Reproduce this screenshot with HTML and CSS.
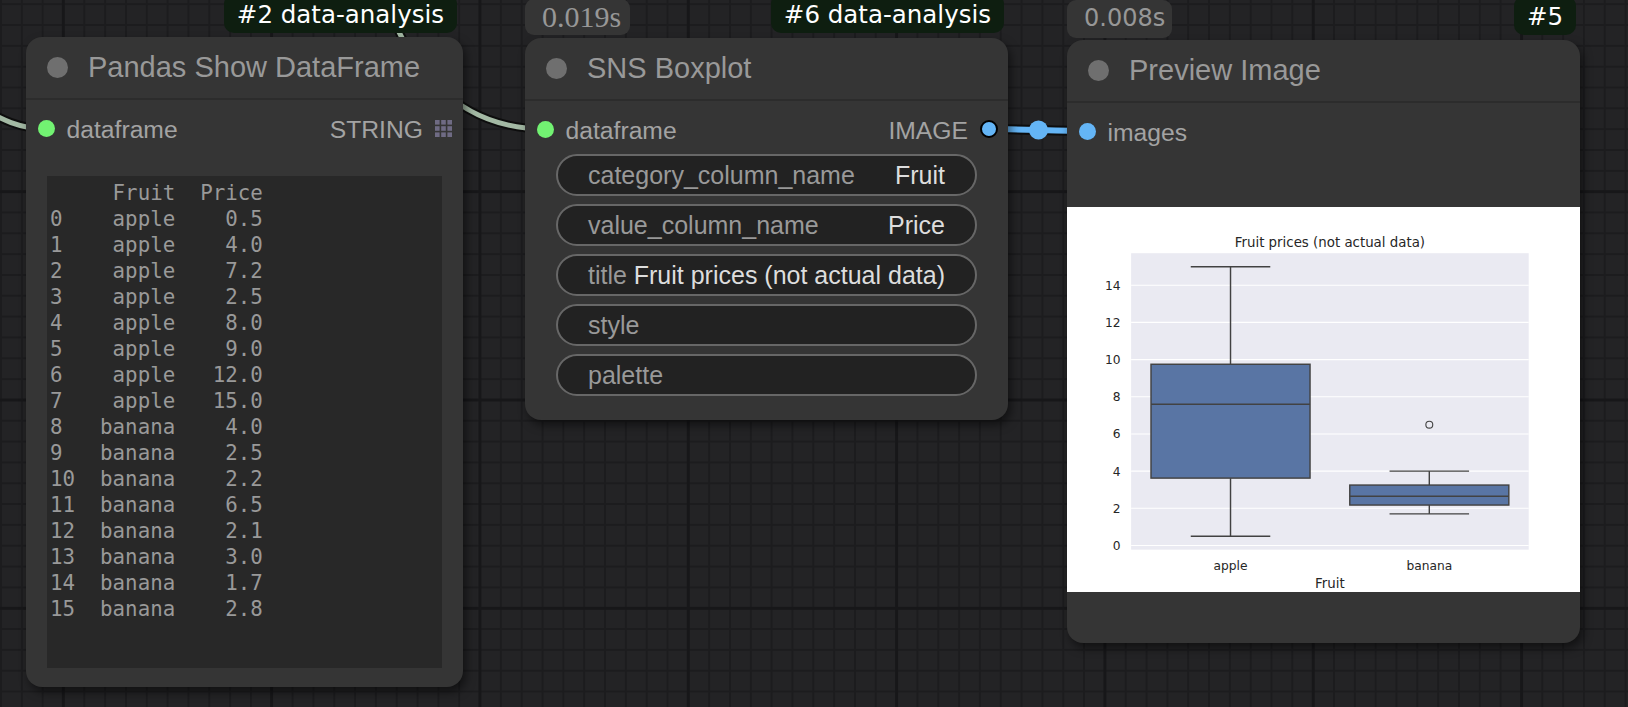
FILE: index.html
```html
<!DOCTYPE html>
<html>
<head>
<meta charset="utf-8">
<title>Nodes</title>
<link rel="stylesheet" href="styles.css">
</head>
<body>
<div class="canvas">
  <svg class="links" width="1628" height="707" viewBox="0 0 1628 707">
    <path class="link-border" d="M -60 90 C -20 100, 0 129, 47 129"/>
    <path class="link-sage" d="M -60 90 C -20 100, 0 129, 47 129"/>
    <path class="link-border" d="M 385 0 C 400 40, 440 129, 545 129"/>
    <path class="link-sage" d="M 385 0 C 400 40, 440 129, 545 129"/>
    <path class="link-border wide" d="M 989 129 C 1014 129, 1063 131, 1088 131"/>
    <path class="link-blue" d="M 989 129 C 1014 129, 1063 131, 1088 131"/>
    <circle class="link-mid" cx="1038.5" cy="130" r="9.5"/>
  </svg>

  <div class="node node-df">
    <div class="node-top node-top-df">
      <span class="badge-id badge-id-df">#2 data-analysis</span>
    </div>
    <div class="title"><span class="title-dot"></span><span class="title-text">Pandas Show DataFrame</span></div>
    <div class="body">
      <div class="slot-row slot-row-grid">
        <div class="slot-in"><span class="dot dot-green"></span><span class="slot-label">dataframe</span></div>
        <div class="slot-out"><span class="slot-label">STRING</span>
          <svg class="grid-icon" width="17" height="17" viewBox="0 0 17 17">
            <rect x="0" y="0" width="4.6" height="4.6"/><rect x="6.2" y="0" width="4.6" height="4.6"/><rect x="12.4" y="0" width="4.6" height="4.6"/>
            <rect x="0" y="6.2" width="4.6" height="4.6"/><rect x="6.2" y="6.2" width="4.6" height="4.6"/><rect x="12.4" y="6.2" width="4.6" height="4.6"/>
            <rect x="0" y="12.4" width="4.6" height="4.6"/><rect x="6.2" y="12.4" width="4.6" height="4.6"/><rect x="12.4" y="12.4" width="4.6" height="4.6"/>
          </svg>
        </div>
      </div>
<pre class="df">     Fruit  Price
0    apple    0.5
1    apple    4.0
2    apple    7.2
3    apple    2.5
4    apple    8.0
5    apple    9.0
6    apple   12.0
7    apple   15.0
8   banana    4.0
9   banana    2.5
10  banana    2.2
11  banana    6.5
12  banana    2.1
13  banana    3.0
14  banana    1.7
15  banana    2.8</pre>
    </div>
  </div>

  <div class="node node-box">
    <div class="node-top">
      <span class="badge-time badge-serif">0.019s</span>
      <span class="badge-id">#6 data-analysis</span>
    </div>
    <div class="title"><span class="title-dot"></span><span class="title-text">SNS Boxplot</span></div>
    <div class="body">
      <div class="slot-row">
        <div class="slot-in"><span class="dot dot-green"></span><span class="slot-label">dataframe</span></div>
        <div class="slot-out"><span class="slot-label">IMAGE</span><span class="dot dot-blue-out"></span></div>
      </div>
      <div class="widgets">
        <div class="widget"><span class="w-label">category_column_name</span><span class="w-value">Fruit</span></div>
        <div class="widget"><span class="w-label">value_column_name</span><span class="w-value">Price</span></div>
        <div class="widget"><span class="w-label">title</span><span class="w-value">Fruit prices (not actual data)</span></div>
        <div class="widget"><span class="w-label">style</span><span class="w-value"></span></div>
        <div class="widget"><span class="w-label">palette</span><span class="w-value"></span></div>
      </div>
    </div>
  </div>

  <div class="node node-preview">
    <div class="node-top">
      <span class="badge-time badge-sans">0.008s</span>
      <span class="badge-id">#5</span>
    </div>
    <div class="title"><span class="title-dot"></span><span class="title-text">Preview Image</span></div>
    <div class="body">
      <div class="slot-row">
        <div class="slot-in"><span class="dot dot-blue"></span><span class="slot-label">images</span></div>
      </div>
      <svg class="plot" viewBox="0 0 640 480" width="513" height="385" preserveAspectRatio="none">
        <rect width="640" height="480" fill="#ffffff"/>
        <rect x="80" y="57.6" width="496" height="369.6" fill="#eaeaf2"/>
        <g stroke="#ffffff" stroke-width="1.4">
          <line x1="80" x2="576" y1="421.99" y2="421.99"/>
          <line x1="80" x2="576" y1="375.64" y2="375.64"/>
          <line x1="80" x2="576" y1="329.30" y2="329.30"/>
          <line x1="80" x2="576" y1="282.95" y2="282.95"/>
          <line x1="80" x2="576" y1="236.61" y2="236.61"/>
          <line x1="80" x2="576" y1="190.26" y2="190.26"/>
          <line x1="80" x2="576" y1="143.92" y2="143.92"/>
          <line x1="80" x2="576" y1="97.57" y2="97.57"/>
        </g>
        <g stroke="#424242" stroke-width="1.8" fill="#5975a4">
          <line x1="204" x2="204" y1="196.06" y2="74.40"/>
          <line x1="204" x2="204" y1="337.99" y2="410.40"/>
          <line x1="154.4" x2="253.6" y1="74.40" y2="74.40"/>
          <line x1="154.4" x2="253.6" y1="410.40" y2="410.40"/>
          <rect x="104.8" y="196.06" width="198.4" height="141.93"/>
          <line x1="104.8" x2="303.2" y1="245.88" y2="245.88"/>
          <line x1="452" x2="452" y1="346.68" y2="329.30"/>
          <line x1="452" x2="452" y1="371.59" y2="382.59"/>
          <line x1="402.4" x2="501.6" y1="329.30" y2="329.30"/>
          <line x1="402.4" x2="501.6" y1="382.59" y2="382.59"/>
          <rect x="352.8" y="346.68" width="198.4" height="24.91"/>
          <line x1="352.8" x2="551.2" y1="360.58" y2="360.58"/>
          <circle cx="452" cy="271.36" r="4.3" fill="none" stroke-width="1.4"/>
        </g>
        <g class="plot-text" font-size="15.28" text-anchor="end">
          <text x="66.8" y="427.6">0</text>
          <text x="66.8" y="381.2">2</text>
          <text x="66.8" y="334.9">4</text>
          <text x="66.8" y="288.5">6</text>
          <text x="66.8" y="242.2">8</text>
          <text x="66.8" y="195.9">10</text>
          <text x="66.8" y="149.5">12</text>
          <text x="66.8" y="103.2">14</text>
        </g>
        <g class="plot-text" font-size="15.28" text-anchor="middle">
          <text x="204" y="452.9">apple</text>
          <text x="452" y="452.9">banana</text>
        </g>
        <g class="plot-text" font-size="16.67" text-anchor="middle">
          <text x="328" y="475.5">Fruit</text>
          <text x="328" y="49.5">Fruit prices (not actual data)</text>
        </g>
      </svg>
    </div>
  </div>
</div>
</body>
</html>
```

FILE: styles.css
```css
html, body {
  margin: 0;
  padding: 0;
}

body {
  background: #222224;
  font-family: "Liberation Sans", Arial, sans-serif;
}

.canvas {
  position: relative;
  width: 1628px;
  height: 707px;
  overflow: hidden;
  background-color: #232325;
  background-image:
    linear-gradient(to right, #171719 0, #171719 3px, transparent 3px),
    linear-gradient(to bottom, #171719 0, #171719 3px, transparent 3px),
    linear-gradient(to right, #1c1c1e 0, #1c1c1e 2px, transparent 2px),
    linear-gradient(to bottom, #1c1c1e 0, #1c1c1e 2px, transparent 2px);
  background-size:
    208.33px 208.33px,
    208.33px 208.33px,
    20.833px 20.833px,
    20.833px 20.833px;
  background-position:
    61.8px 0,
    0 190.2px,
    0 0,
    0 3.2px;
}

/* links */
.links {
  position: absolute;
  left: 0;
  top: 0;
  fill: none;
}

.link-border {
  stroke: #0d0d0d;
  stroke-width: 9;
  fill: none;
}

.link-border.wide {
  stroke-width: 10;
}

.link-sage {
  stroke: #a3b9a4;
  stroke-width: 5;
  fill: none;
}

.link-blue {
  stroke: #64b5f6;
  stroke-width: 6;
  fill: none;
}

.link-mid {
  fill: #64b5f6;
}

/* nodes */
.node {
  position: absolute;
  background: #353535;
  border-radius: 16px;
  box-shadow: 3px 5px 10px rgba(0, 0, 0, 0.5);
  display: flex;
  flex-direction: column;
}

.node-df {
  left: 26px;
  top: 37px;
  width: 437px;
}

.node-box {
  left: 525px;
  top: 38px;
  width: 483px;
}

.node-preview {
  left: 1067px;
  top: 40px;
  width: 513px;
}

.node-top {
  position: absolute;
  left: 0;
  right: 4px;
  bottom: 100%;
  display: flex;
  justify-content: space-between;
  align-items: flex-end;
}

.node-top-df {
  right: 6px;
  justify-content: flex-end;
}

.badge-id {
  display: block;
  background: #0e1e10;
  color: #ffffff;
  font-family: "DejaVu Sans", sans-serif;
  font-size: 24.5px;
  line-height: 24.5px;
  padding: 9px 13px 6px;
  border-radius: 10px;
  margin-bottom: 5px;
  white-space: nowrap;
}

.badge-id-df {
  margin-bottom: 4px;
}

.badge-time {
  box-sizing: border-box;
  width: 105px;
  padding-left: 17px;
  background: #353535;
  color: #979797;
  border-radius: 9px;
  line-height: 36px;
  white-space: nowrap;
}

.badge-serif {
  font-family: "Liberation Serif", "Times New Roman", serif;
  font-size: 30px;
  margin-bottom: 3px;
}

.badge-sans {
  font-family: "DejaVu Sans", sans-serif;
  font-size: 24px;
  padding-bottom: 2px;
  margin-bottom: 2px;
}

.title {
  height: 61px;
  border-bottom: 2px solid #2c2c2c;
  display: flex;
  align-items: center;
  gap: 20px;
  padding-left: 21px;
}

.title-dot {
  width: 21px;
  height: 21px;
  border-radius: 50%;
  background: #6f6f6f;
  flex: none;
}

.title-text {
  color: #999999;
  font-size: 29px;
  white-space: nowrap;
}

.body {
  padding-top: 7px;
  display: flex;
  flex-direction: column;
}

.slot-row {
  height: 42px;
  display: flex;
  align-items: center;
  justify-content: space-between;
  padding: 0 10px 0 12px;
}

.slot-row-grid {
  padding-right: 11px;
}

.slot-in,
.slot-out {
  display: flex;
  align-items: center;
  gap: 11.5px;
}

.slot-out {
  gap: 12px;
}

.slot-label {
  color: #a3a3a3;
  font-size: 24.7px;
  padding-top: 4px;
  white-space: nowrap;
}

.dot {
  width: 17px;
  height: 17px;
  border-radius: 50%;
  flex: none;
}

.dot-green {
  background: #72f272;
}

.dot-blue {
  background: #64b5f6;
}

.dot-blue-out {
  box-sizing: border-box;
  width: 18px;
  height: 18px;
  background: #64b5f6;
  border: 2px solid #000000;
}

.grid-icon {
  display: block;
  fill: #6f6b84;
}

.df {
  box-sizing: border-box;
  margin: 27px 21px 19px;
  height: 492px;
  padding: 4px 3px;
  background: #282828;
  color: #999999;
  font-family: "DejaVu Sans Mono", monospace;
  font-size: 20.8px;
  line-height: 26px;
  overflow: hidden;
}

.widgets {
  margin: 4px 31px 24px;
  display: flex;
  flex-direction: column;
  gap: 8px;
}

.widget {
  box-sizing: border-box;
  height: 42px;
  border: 2px solid #676767;
  border-radius: 21px;
  background: #222222;
  display: flex;
  align-items: center;
  justify-content: space-between;
  padding: 0 30px;
  font-size: 25px;
  white-space: nowrap;
  overflow: hidden;
}

.w-label {
  color: #999999;
}

.w-value {
  color: #dddddd;
}

.plot {
  display: block;
  margin: 55px 0 51px;
}

.plot-text {
  font-family: "DejaVu Sans", sans-serif;
  fill: #262626;
}
```
